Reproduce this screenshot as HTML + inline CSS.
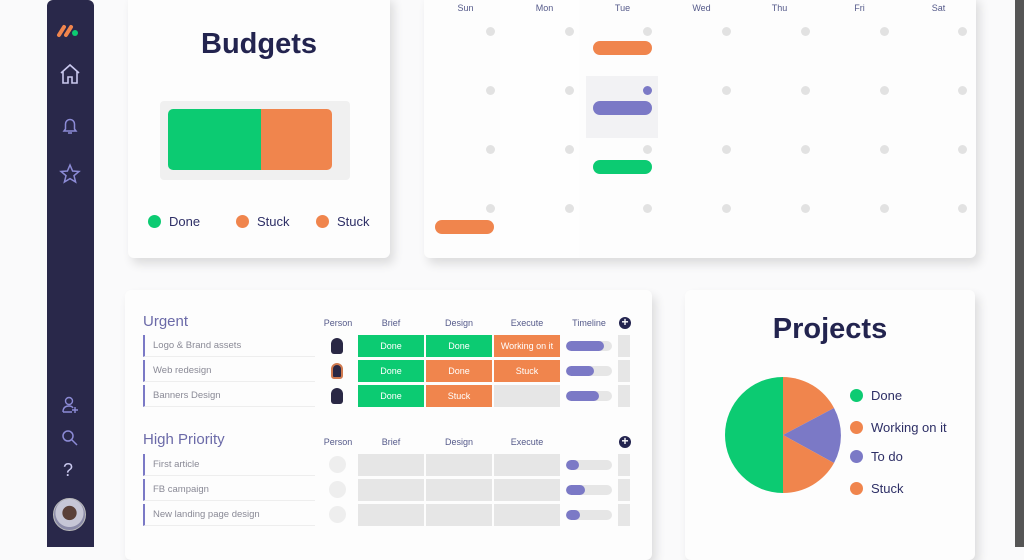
<!DOCTYPE html>
<html><head><style>
*{margin:0;padding:0;box-sizing:border-box}
body{width:1024px;height:547px;overflow:hidden;background:#fafafb;font-family:"Liberation Sans",sans-serif;position:relative}
.a{position:absolute}
.card{position:absolute;background:#fdfdfd;border-radius:6px;box-shadow:4px 6px 10px rgba(0,0,0,0.12)}
.dot{position:absolute;width:9px;height:9px;border-radius:50%;background:#e2e2e2}
.pill{position:absolute;height:14px;border-radius:7px}
.h{position:absolute;font-size:9px;color:#555a8a;text-align:center}
.name{position:absolute;left:143px;width:172px;height:22px;border-left:2px solid #7b79c6;border-bottom:1px solid #eee;font-size:9.5px;color:#8a8a96;padding-left:8px;line-height:22px}
.c{position:absolute;width:66px;height:22px;font-size:9px;color:#fff;text-align:center;line-height:22px}
.g{background:#0ccb72}.o{background:#f0854d}.e{background:#e6e6e6}
.tl{position:absolute;left:566px;width:46px;height:10px;border-radius:5px;background:#e6e6e6;overflow:hidden}
.tl i{display:block;height:10px;background:#7b79c6;border-radius:5px}
.lc{position:absolute;left:618px;width:12px;height:22px;background:#e6e6e6}
.leg{position:absolute;font-size:13px;color:#2e2f66}
.leg b{display:inline-block;width:13px;height:13px;border-radius:50%;vertical-align:-2px;margin-right:8px}
</style></head><body>
<div class="a" style="left:1015px;top:0;width:9px;height:547px;background:#555"></div>
<!-- sidebar -->
<div class="a" style="left:47px;top:0;width:47px;height:547px;background:#29284a;border-radius:6px 6px 0 0"></div>
<svg class="a" style="left:56px;top:22px" width="30" height="16"><path d="M3 13 L8 5 M10 13 L15 5" stroke="#f0854d" stroke-width="4" stroke-linecap="round"/><circle cx="19" cy="11" r="3" fill="#0ccb72"/></svg>
<svg class="a" style="left:58px;top:62px" width="24" height="24" fill="none" stroke="#c9c8ee" stroke-width="1.6"><path d="M3 11 L12 3 L21 11 M5 9 V21 H10 V15 H14 V21 H19 V9"/></svg>
<svg class="a" style="left:60px;top:116px" width="20" height="20" fill="none" stroke="#8c8bd6" stroke-width="1.5"><path d="M4 15 H16 L14.5 13 V8 A4.5 4.5 0 0 0 5.5 8 V13 Z M8 17 H12"/></svg>
<svg class="a" style="left:59px;top:163px" width="22" height="22" fill="none" stroke="#8c8bd6" stroke-width="1.5"><path d="M11 2 L13.6 8 L20 8.5 L15 12.7 L16.6 19 L11 15.6 L5.4 19 L7 12.7 L2 8.5 L8.4 8 Z"/></svg>
<svg class="a" style="left:60px;top:395px" width="20" height="20" fill="none" stroke="#8c8bd6" stroke-width="1.4"><circle cx="9" cy="6" r="3.5"/><path d="M3 17 Q3 11 9 11 Q12 11 13 13 M3 17 H12 M15 12 V18 M12 15 H18"/></svg>
<svg class="a" style="left:61px;top:429px" width="18" height="18" fill="none" stroke="#8c8bd6" stroke-width="1.5"><circle cx="7" cy="7" r="5"/><path d="M11 11 L16 16"/></svg>
<div class="a" style="left:63px;top:460px;font-size:18px;color:#c9c8ee">?</div>
<div class="a" style="left:53px;top:498px;width:33px;height:33px;border-radius:50%;background:radial-gradient(circle at 50% 45%,#5a4038 0 30%,#c6c6d6 32% 60%,#8a8aa8 62%);border:1px solid #bbb"></div>
<!-- budgets -->
<div class="card" style="left:128px;top:-6px;width:262px;height:264px"></div>
<div class="a" style="left:128px;top:28px;width:262px;text-align:center;font-size:29px;font-weight:bold;color:#23244f">Budgets</div>
<div class="a" style="left:160px;top:101px;width:190px;height:79px;background:#f0f0f0;border-radius:4px"></div>
<div class="a" style="left:168px;top:109px;width:94px;height:61px;background:#0ccb72;border-radius:5px 0 0 5px"></div>
<div class="a" style="left:261px;top:109px;width:71px;height:61px;background:#f0854d;border-radius:0 5px 5px 0"></div>
<div class="leg" style="left:148px;top:214px"><b class="g"></b>Done</div>
<div class="leg" style="left:236px;top:214px"><b class="o"></b>Stuck</div>
<div class="leg" style="left:316px;top:214px"><b class="o"></b>Stuck</div>
<!-- calendar -->
<div class="card" style="left:424px;top:-6px;width:552px;height:264px"></div>
<div class="a" style="left:500px;top:0;width:79px;height:258px;background:#fefefe"></div>
<div class="a" style="left:586px;top:76px;width:72px;height:62px;background:#f2f2f4"></div>
<div id="cal"></div>
<div class="h" style="left:426px;top:3px;width:79px">Sun</div>
<div class="h" style="left:505px;top:3px;width:79px">Mon</div>
<div class="h" style="left:583px;top:3px;width:79px">Tue</div>
<div class="h" style="left:662px;top:3px;width:79px">Wed</div>
<div class="h" style="left:740px;top:3px;width:79px">Thu</div>
<div class="h" style="left:820px;top:3px;width:79px">Fri</div>
<div class="h" style="left:899px;top:3px;width:79px">Sat</div>
<div class="dot" style="left:486px;top:27px"></div><div class="dot" style="left:565px;top:27px"></div><div class="dot" style="left:643px;top:27px"></div><div class="dot" style="left:722px;top:27px"></div><div class="dot" style="left:801px;top:27px"></div><div class="dot" style="left:880px;top:27px"></div><div class="dot" style="left:958px;top:27px"></div>
<div class="dot" style="left:486px;top:86px"></div><div class="dot" style="left:565px;top:86px"></div><div class="dot" style="left:643px;top:86px;background:#7b79c6"></div><div class="dot" style="left:722px;top:86px"></div><div class="dot" style="left:801px;top:86px"></div><div class="dot" style="left:880px;top:86px"></div><div class="dot" style="left:958px;top:86px"></div>
<div class="dot" style="left:486px;top:145px"></div><div class="dot" style="left:565px;top:145px"></div><div class="dot" style="left:643px;top:145px"></div><div class="dot" style="left:722px;top:145px"></div><div class="dot" style="left:801px;top:145px"></div><div class="dot" style="left:880px;top:145px"></div><div class="dot" style="left:958px;top:145px"></div>
<div class="dot" style="left:486px;top:204px"></div><div class="dot" style="left:565px;top:204px"></div><div class="dot" style="left:643px;top:204px"></div><div class="dot" style="left:722px;top:204px"></div><div class="dot" style="left:801px;top:204px"></div><div class="dot" style="left:880px;top:204px"></div><div class="dot" style="left:958px;top:204px"></div>
<div class="pill o" style="left:593px;top:41px;width:59px"></div>
<div class="pill" style="left:593px;top:101px;width:59px;background:#7b79c6"></div>
<div class="pill g" style="left:593px;top:160px;width:59px"></div>
<div class="pill o" style="left:435px;top:220px;width:59px"></div>
<!-- table -->
<div class="card" style="left:125px;top:290px;width:527px;height:270px"></div>
<div class="a" style="left:143px;top:313px;font-size:15px;color:#6b6aa8">Urgent</div>
<div class="h" style="left:320px;top:318px;width:36px">Person</div>
<div class="h" style="left:358px;top:318px;width:66px">Brief</div>
<div class="h" style="left:426px;top:318px;width:66px">Design</div>
<div class="h" style="left:494px;top:318px;width:66px">Execute</div>
<div class="h" style="left:564px;top:318px;width:50px">Timeline</div>
<div class="a" style="left:619px;top:317px;width:12px;height:12px;border-radius:50%;background:#23244f;color:#fff;font-size:12px;line-height:11px;text-align:center;font-weight:bold">+</div>
<div class="name" style="top:335px">Logo &amp; Brand assets</div>
<div class="name" style="top:360px">Web redesign</div>
<div class="name" style="top:385px">Banners Design</div>
<div class="a" style="left:331px;top:338px;width:12px;height:16px;border-radius:6px 6px 3px 3px;background:#2a2845"></div>
<div class="a" style="left:331px;top:363px;width:12px;height:16px;border-radius:6px 6px 3px 3px;background:#2a2845;border:2px solid #d07a50"></div>
<div class="a" style="left:331px;top:388px;width:12px;height:16px;border-radius:6px 6px 3px 3px;background:#2a2845"></div>
<div class="c g" style="left:358px;top:335px">Done</div><div class="c g" style="left:426px;top:335px">Done</div><div class="c o" style="left:494px;top:335px">Working on it</div>
<div class="c g" style="left:358px;top:360px">Done</div><div class="c o" style="left:426px;top:360px">Done</div><div class="c o" style="left:494px;top:360px">Stuck</div>
<div class="c g" style="left:358px;top:385px">Done</div><div class="c o" style="left:426px;top:385px">Stuck</div><div class="c e" style="left:494px;top:385px"></div>
<div class="tl" style="top:341px"><i style="width:38px"></i></div>
<div class="tl" style="top:366px"><i style="width:28px"></i></div>
<div class="tl" style="top:391px"><i style="width:33px"></i></div>
<div class="lc" style="top:335px"></div><div class="lc" style="top:360px"></div><div class="lc" style="top:385px"></div>
<div class="a" style="left:143px;top:431px;font-size:15px;color:#6b6aa8">High Priority</div>
<div class="h" style="left:320px;top:437px;width:36px">Person</div>
<div class="h" style="left:358px;top:437px;width:66px">Brief</div>
<div class="h" style="left:426px;top:437px;width:66px">Design</div>
<div class="h" style="left:494px;top:437px;width:66px">Execute</div>
<div class="a" style="left:619px;top:436px;width:12px;height:12px;border-radius:50%;background:#23244f;color:#fff;font-size:12px;line-height:11px;text-align:center;font-weight:bold">+</div>
<div class="name" style="top:454px">First article</div>
<div class="name" style="top:479px">FB campaign</div>
<div class="name" style="top:504px">New landing page design</div>
<div class="a" style="left:329px;top:456px;width:17px;height:17px;border-radius:50%;background:#eee"></div>
<div class="a" style="left:329px;top:481px;width:17px;height:17px;border-radius:50%;background:#eee"></div>
<div class="a" style="left:329px;top:506px;width:17px;height:17px;border-radius:50%;background:#eee"></div>
<div class="c e" style="left:358px;top:454px"></div><div class="c e" style="left:426px;top:454px"></div><div class="c e" style="left:494px;top:454px"></div>
<div class="c e" style="left:358px;top:479px"></div><div class="c e" style="left:426px;top:479px"></div><div class="c e" style="left:494px;top:479px"></div>
<div class="c e" style="left:358px;top:504px"></div><div class="c e" style="left:426px;top:504px"></div><div class="c e" style="left:494px;top:504px"></div>
<div class="tl" style="top:460px"><i style="width:13px"></i></div>
<div class="tl" style="top:485px"><i style="width:19px"></i></div>
<div class="tl" style="top:510px"><i style="width:14px"></i></div>
<div class="lc" style="top:454px"></div><div class="lc" style="top:479px"></div><div class="lc" style="top:504px"></div>
<!-- projects -->
<div class="card" style="left:685px;top:290px;width:290px;height:270px"></div>
<div class="a" style="left:685px;top:313px;width:290px;text-align:center;font-size:29px;font-weight:bold;color:#23244f">Projects</div>
<svg class="a" style="left:723px;top:375px" width="120" height="120">
<path d="M60 60 L60 2 A58 58 0 0 0 60 118 Z" fill="#0ccb72"/>
<path d="M60 60 L60 2 A58 58 0 0 1 111 33 Z" fill="#f0854d"/>
<path d="M60 60 L111 33 A58 58 0 0 1 111 88 Z" fill="#7b79c6"/>
<path d="M60 60 L111 88 A58 58 0 0 1 60 118 Z" fill="#f0854d"/>
</svg>
<div class="leg" style="left:850px;top:388px"><b class="g"></b>Done</div>
<div class="leg" style="left:850px;top:420px"><b class="o"></b>Working on it</div>
<div class="leg" style="left:850px;top:449px"><b style="background:#7b79c6"></b>To do</div>
<div class="leg" style="left:850px;top:481px"><b class="o"></b>Stuck</div>
</body></html>
